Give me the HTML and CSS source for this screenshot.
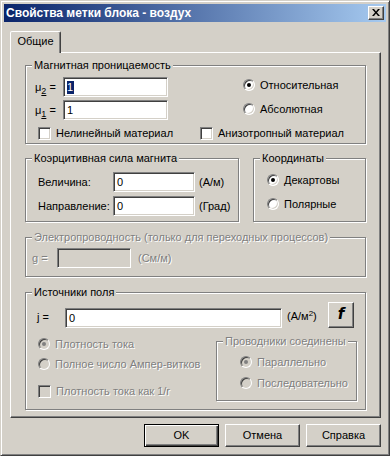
FILE: index.html
```html
<!DOCTYPE html>
<html lang="ru">
<head>
<meta charset="utf-8">
<title>Свойства метки блока - воздух</title>
<link rel="stylesheet" href="styles.css">
</head>
<body>
<div class="window">
  <div class="titlebar">
    <span class="title">Свойства метки блока - воздух</span>
    <span class="close"><svg width="8" height="7" viewBox="0 0 8 7"><path d="M0 0h2l2 2.5L6 0h2L5 3.5 8 7H6L4 4.5 2 7H0l3-3.5z" fill="#000"/></svg></span>
  </div>
  <div class="client">
    <div class="tabs"><div class="tab">Общие</div></div>
    <div class="panel">
      <fieldset class="group g1">
        <legend>Магнитная проницаемость</legend>
        <div class="mu-block">
          <div class="mu-col">
            <div class="field-row"><span class="mu-label">μ<sub>2</sub> =</span><div class="edit mu-edit"><span class="sel">1</span></div></div>
            <div class="field-row"><span class="mu-label">μ<sub>1</sub> =</span><div class="edit mu-edit">1</div></div>
          </div>
          <div class="radio-col">
            <div class="opt"><span class="radio checked"></span><span>Относительная</span></div>
            <div class="opt"><span class="radio"></span><span>Абсолютная</span></div>
          </div>
        </div>
        <div class="check-row">
          <div class="opt check-first"><span class="check"></span><span>Нелинейный материал</span></div>
          <div class="opt"><span class="check"></span><span>Анизотропный материал</span></div>
        </div>
      </fieldset>

      <div class="pair">
        <fieldset class="group g2">
          <legend>Коэрцитивная сила магнита</legend>
          <div class="g2-rows">
            <div class="field-row"><span class="hc-label">Величина:</span><div class="edit hc-edit">0</div><span class="unit">(А/м)</span></div>
            <div class="field-row"><span class="hc-label">Направление:</span><div class="edit hc-edit">0</div><span class="unit">(Град)</span></div>
          </div>
        </fieldset>
        <fieldset class="group g3">
          <legend>Координаты</legend>
          <div class="g3-rows">
            <div class="opt"><span class="radio checked"></span><span>Декартовы</span></div>
            <div class="opt"><span class="radio"></span><span>Полярные</span></div>
          </div>
        </fieldset>
      </div>

      <fieldset class="group g4 disabled">
        <legend>Электропроводность (только для переходных процессов)</legend>
        <div class="field-row g4-row"><span class="g-label">g =</span><div class="edit g-edit"></div><span class="unit g-unit">(См/м)</span></div>
      </fieldset>

      <fieldset class="group g5">
        <legend>Источники поля</legend>
        <div class="j-row">
          <span class="j-label">j =</span>
          <div class="edit j-edit">0</div>
          <span class="unit j-unit">(А/м<sup>2</sup>)</span>
          <span class="fbtn">f</span>
        </div>
        <div class="lower">
          <div class="lower-left disabled">
            <div class="opt"><span class="radio checked"></span><span>Плотность тока</span></div>
            <div class="opt"><span class="radio"></span><span>Полное число Ампер-витков</span></div>
            <div class="opt opt-check"><span class="check"></span><span>Плотность тока как 1/r</span></div>
          </div>
          <fieldset class="group sub disabled">
            <legend>Проводники соединены</legend>
            <div class="sub-rows">
              <div class="opt"><span class="radio checked"></span><span>Параллельно</span></div>
              <div class="opt"><span class="radio"></span><span>Последовательно</span></div>
            </div>
          </fieldset>
        </div>
      </fieldset>
    </div>
    <div class="buttons">
      <div class="btn default">OK</div>
      <div class="btn">Отмена</div>
      <div class="btn">Справка</div>
    </div>
  </div>
</div>
</body>
</html>
```
FILE: styles.css
```css
* { box-sizing: border-box; }
html, body { margin: 0; padding: 0; }
body {
  background: #d4d0c8;
  font: 11px/13px "Liberation Sans", Arial, sans-serif;
  color: #000;
}
.window {
  width: 390px;
  height: 456px;
  border: 1px solid;
  border-color: #d4d0c8 #404040 #404040 #d4d0c8;
  box-shadow: inset 1px 1px #fff, inset -1px -1px #808080;
  padding: 3px;
  display: flex;
  flex-direction: column;
}
.titlebar {
  height: 18px;
  flex: none;
  background: linear-gradient(to right, #0a246a, #a6caf0);
  display: flex;
  align-items: flex-start;
  justify-content: space-between;
  padding: 0 2px;
}
.title {
  color: #fff;
  font-weight: bold;
  font-size: 12px;
  line-height: 18px;
}
.close {
  margin-top: 2px;
  width: 16px;
  height: 14px;
  border: 1px solid;
  border-color: #fff #404040 #404040 #fff;
  box-shadow: inset -1px -1px #808080;
  background: #d4d0c8;
  display: flex;
  align-items: center;
  justify-content: center;
  padding: 0 1px 1px 0;
}
.close svg { display: block; }
.client {
  flex: 1;
  padding: 9px 5px 5px 6px;
  display: flex;
  flex-direction: column;
}
.tabs {
  display: flex;
  height: 21px;
  flex: none;
}
.tab {
  position: relative;
  z-index: 1;
  width: 51px;
  height: 22px;
  border: 1px solid;
  border-bottom: none;
  border-color: #fff #404040 transparent #fff;
  border-radius: 2px 2px 0 0;
  box-shadow: inset -1px 0 #808080;
  background: #d4d0c8;
  text-align: center;
  padding-top: 3px;
}
.panel {
  height: 366px;
  flex: none;
  border: 1px solid;
  border-color: #fff #404040 #404040 #fff;
  box-shadow: inset -1px -1px #808080;
  padding: 6px 14px 0 14px;
  display: flex;
  flex-direction: column;
}
.group {
  margin: 0;
  padding: 0;
  min-width: 0;
  border: 1px solid #808080;
  box-shadow: inset 1px 1px #fff, 1px 1px #fff;
  flex: none;
}
.group > legend {
  margin-left: 6px;
  padding: 0 2px;
  height: 13px;
  line-height: 13px;
  background: #d4d0c8;
}
.disabled, .disabled legend { color: #808080; text-shadow: 1px 1px 0 #fff; }

.opt {
  display: flex;
  align-items: center;
  height: 16px;
  white-space: nowrap;
}
.radio {
  width: 12px;
  height: 12px;
  border-radius: 50%;
  border: 1px solid;
  border-color: #808080 #fff #fff #808080;
  box-shadow: inset 1px 1px #404040, inset -1px -1px #d4d0c8;
  background: #fff;
  margin-right: 5px;
  display: flex;
  align-items: center;
  justify-content: center;
  flex: none;
}
.radio.checked::after {
  content: "";
  width: 4px;
  height: 4px;
  border-radius: 50%;
  background: #000;
}
.disabled .radio { background: #d4d0c8; }
.disabled .radio.checked::after { background: #808080; }
.check {
  width: 13px;
  height: 13px;
  border: 1px solid;
  border-color: #808080 #fff #fff #808080;
  box-shadow: inset 1px 1px #404040, inset -1px -1px #d4d0c8;
  background: #fff;
  margin-right: 5px;
  flex: none;
}
.disabled .check { background: #d4d0c8; }

.edit {
  height: 20px;
  border: 1px solid;
  border-color: #808080 #fff #fff #808080;
  box-shadow: inset 1px 1px #404040, inset -1px -1px #d4d0c8;
  background: #fff;
  padding: 3px 3px 0 3px;
  white-space: nowrap;
  flex: none;
}
.sel { background: #0a246a; color: #fff; display: inline-block; padding: 0 1px 0 0; }
.field-row { display: flex; align-items: center; height: 20px; }
.unit { white-space: nowrap; }

/* group 1 */
.g1 { height: 85px; }
.mu-block { display: flex; padding-top: 5px; }
.mu-col { display: flex; flex-direction: column; gap: 3px; padding-left: 9px; }
.mu-label { width: 28px; white-space: nowrap; }
.mu-label sub { font-size: 9px; line-height: 0; text-decoration: underline; vertical-align: -3px; }
.mu-edit { width: 105px; }
.radio-col { display: flex; flex-direction: column; gap: 8px; margin-left: 75px; }
.check-row { display: flex; margin-top: 5px; padding-left: 12px; }
.check-first { width: 162px; }

/* group 2/3 */
.pair { display: flex; gap: 14px; margin-top: 8px; height: 70px; flex: none; }
.g2 { width: 214px; height: 70px; }
.g3 { width: 113px; height: 70px; }
.g2-rows { display: flex; flex-direction: column; gap: 4px; padding: 7px 0 0 12px; }
.hc-label { width: 75px; }
.hc-edit { width: 82px; }
.g2 .unit { margin-left: 4px; }
.g3-rows { display: flex; flex-direction: column; gap: 8px; padding: 7px 0 0 13px; }

/* group 4 */
.g4 { height: 46px; margin-top: 9px; }
.g4-row { margin-top: 4px; padding-left: 6px; }
.g-label { width: 25px; }
.g-edit { width: 74px; background: #d4d0c8; }
.g-unit { margin-left: 7px; }

/* group 5 */
.g5 { height: 124px; margin-top: 9px; }
.j-row { display: flex; align-items: flex-start; padding: 3px 0 0 11px; height: 29px; }
.j-label { width: 28px; margin-top: 9px; }
.j-edit { width: 217px; margin-top: 6px; }
.j-unit { margin: 8px 0 0 5px; width: 41px; }
.j-unit sup { font-size: 8px; line-height: 0; vertical-align: 4px; }
.fbtn {
  width: 26px;
  height: 26px;
  border: 1px solid;
  border-color: #fff #404040 #404040 #fff;
  box-shadow: inset -1px -1px #808080;
  display: flex;
  align-items: center;
  justify-content: center;
  font: italic bold 15px/1 "DejaVu Sans", "Liberation Sans", sans-serif;
  padding-bottom: 1px;
}
.lower { display: flex; margin-top: 7px; }
.lower-left { display: flex; flex-direction: column; padding: 1px 0 0 12px; gap: 4px; flex: 1; }
.lower-left .opt-check { margin-top: 7px; }
.sub { width: 141px; height: 66px; margin-right: 8px; }
.sub-rows { display: flex; flex-direction: column; gap: 5px; padding: 6px 0 0 23px; }

/* buttons */
.buttons { display: flex; justify-content: flex-end; gap: 6px; margin-top: 6px; flex: none; }
.btn {
  width: 75px;
  height: 23px;
  border: 1px solid;
  border-color: #fff #404040 #404040 #fff;
  box-shadow: inset -1px -1px #808080;
  display: flex;
  align-items: center;
  justify-content: center;
  padding-bottom: 1px;
}
.btn.default {
  border-color: #000;
  box-shadow: inset 1px 1px #fff, inset -1px -1px #404040, inset -2px -2px #808080;
}
```
